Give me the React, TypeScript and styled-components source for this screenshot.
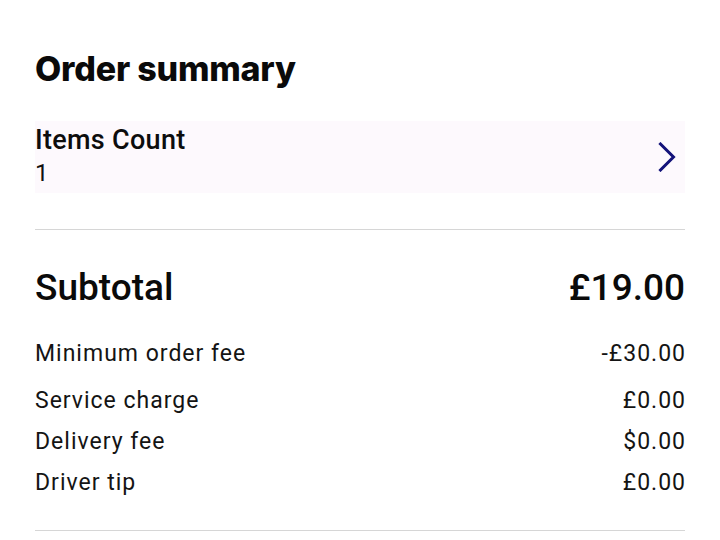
import styled, { createGlobalStyle } from 'styled-components';

const GlobalStyle = createGlobalStyle`
  html, body {
    margin: 0;
    padding: 0;
    background: #ffffff;
  }
  body {
    font-family: Roboto, "Liberation Sans", sans-serif;
    color: #111111;
  }
`;

const Page = styled.div`
  width: 720px;
  height: 540px;
  box-sizing: border-box;
  padding: 0 35px;
  overflow: hidden;
`;

const Heading = styled.h1`
  margin: 0;
  padding-top: 49px;
  font-family: Inter, "Liberation Sans", sans-serif;
  font-size: 34px;
  line-height: 40px;
  font-weight: 800;
  letter-spacing: -0.2px;
  color: #0a0a0a;
`;

const CountCard = styled.button`
  display: flex;
  align-items: center;
  justify-content: space-between;
  width: 100%;
  height: 72px;
  margin-top: 32px;
  padding: 0;
  border: none;
  background: #fdf9fd;
  text-align: left;
  cursor: pointer;
  font-family: inherit;
`;

const CountText = styled.div`
  display: flex;
  flex-direction: column;
`;

const CountLabel = styled.span`
  font-size: 27px;
  line-height: 32px;
  font-weight: 500;
  letter-spacing: 0.3px;
  color: #0d0d0d;
`;

const CountValue = styled.span`
  font-size: 24px;
  line-height: 34px;
  font-weight: 400;
  color: #111111;
`;

const Chevron = styled.svg`
  width: 22px;
  height: 30px;
  margin-right: 6px;
  flex-shrink: 0;
`;

const Divider = styled.hr`
  margin: 0;
  border: none;
  border-top: 1px solid #d6d6d6;
`;

const Section = styled.section`
  padding-top: 36px;
`;

const TotalRow = styled.div`
  display: flex;
  justify-content: space-between;
  align-items: baseline;
  font-size: 37px;
  line-height: 44px;
  font-weight: 500;
  color: #0a0a0a;
`;

const FeeList = styled.div`
  display: flex;
  flex-direction: column;
  margin-top: 23px;
  margin-bottom: 27px;
`;

const FeeRow = styled.div<{ $gap?: number }>`
  display: flex;
  justify-content: space-between;
  align-items: baseline;
  margin-top: ${(p) => p.$gap ?? 0}px;
  font-size: 23px;
  line-height: 41px;
  letter-spacing: 1px;
  color: #141414;
`;

const Amount = styled.span`
  margin-right: -1px;
`;

const fees = [
  { label: 'Minimum order fee', amount: '-£30.00', gap: 0 },
  { label: 'Service charge', amount: '£0.00', gap: 6 },
  { label: 'Delivery fee', amount: '$0.00', gap: 0 },
  { label: 'Driver tip', amount: '£0.00', gap: 0 },
];

export default function App() {
  return (
    <>
      <GlobalStyle />
      <Page>
        <Heading>Order summary</Heading>
        <CountCard type="button">
          <CountText>
            <CountLabel>Items Count</CountLabel>
            <CountValue>1</CountValue>
          </CountText>
          <Chevron viewBox="0 0 22 30" fill="none">
            <path d="M3.5 2 L16.5 15 L3.5 28" stroke="#13137a" strokeWidth="3" strokeLinecap="square" />
          </Chevron>
        </CountCard>
        <Section>
          <Divider />
        </Section>
        <Section>
          <TotalRow>
            <span>Subtotal</span>
            <span>£19.00</span>
          </TotalRow>
          <FeeList>
            {fees.map((f) => (
              <FeeRow key={f.label} $gap={f.gap}>
                <span>{f.label}</span>
                <Amount>{f.amount}</Amount>
              </FeeRow>
            ))}
          </FeeList>
          <Divider />
        </Section>
      </Page>
    </>
  );
}
